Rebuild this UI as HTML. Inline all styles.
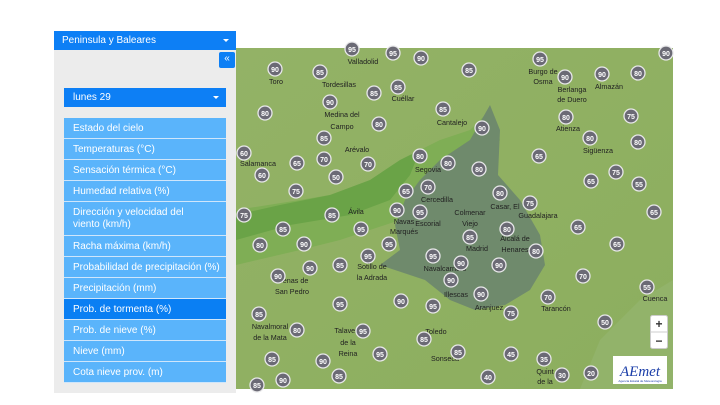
<!DOCTYPE html>
<html><head><meta charset="utf-8"><style>
*{margin:0;padding:0;box-sizing:border-box}
body{width:720px;height:405px;background:#fff;position:relative;overflow:hidden;font-family:"Liberation Sans",sans-serif}
#panel{position:absolute;left:54px;top:48px;width:182px;height:345px;background:#ececec}
.dd{position:absolute;background:#0d7ff5;color:#fff;font-size:10px;line-height:19px;padding-left:8px}
.dd:after{content:"";position:absolute;right:7px;top:8px;border-left:3px solid transparent;border-right:3px solid transparent;border-top:3px solid #fff}
#menu{position:absolute;left:64px;top:118px;width:162px}
#menu div{background:#5ab4fb;color:#fff;font-size:10px;line-height:12px;padding:4.5px 9px 4.5px 9px;border-bottom:1px solid #cfe6fb;height:21px;white-space:nowrap}
#menu div.act{background:#0a7ff3}
#menu div.tall{height:34px}
svg{position:absolute;left:0;top:0}
</style></head><body>
<div id="panel"></div>
<div class="dd" style="left:54px;top:31px;width:182px;height:19px">Peninsula y Baleares</div>
<div style="position:absolute;left:219px;top:52px;width:16px;height:16px;background:#0d7ff5;color:#fff;font-size:10px;line-height:14px;text-align:center;border-radius:2px">«</div>
<div class="dd" style="left:64px;top:88px;width:162px;height:19px;padding-left:9px">lunes 29</div>
<div id="menu">
<div>Estado del cielo</div>
<div>Temperaturas (°C)</div>
<div>Sensación térmica (°C)</div>
<div>Humedad relativa (%)</div>
<div class="tall">Dirección y velocidad del<br>viento (km/h)</div>
<div>Racha máxima (km/h)</div>
<div>Probabilidad de precipitación (%)</div>
<div>Precipitación (mm)</div>
<div class="act">Prob. de tormenta (%)</div>
<div>Prob. de nieve (%)</div>
<div>Nieve (mm)</div>
<div>Cota nieve prov. (m)</div>
</div>
<svg width="720" height="405" viewBox="0 0 720 405">
<defs><clipPath id="c"><rect x="236" y="48" width="437" height="341"/></clipPath>
<linearGradient id="g" x1="0" y1="0" x2="1" y2="1"><stop offset="0" stop-color="#93b266"/><stop offset="1" stop-color="#8cae5e"/></linearGradient></defs>
<g clip-path="url(#c)">
<rect x="236" y="48" width="437" height="341" fill="url(#g)"/>
<path d="M236 210 L300 200 L360 190 L400 170 L420 150 L440 140 L470 130 L490 110 L500 140 L480 180 L440 200 L400 220 L340 240 L300 250 L236 265Z" fill="#7fae55"/>
<path d="M236 240 L290 225 L350 215 L390 200 L410 175 L420 150 L400 160 L370 180 L330 195 L280 205 L236 215Z" fill="#6aa347"/>
<path d="M380 265 L400 250 L395 225 L405 200 L420 180 L440 160 L470 140 L490 105 L500 130 L498 175 L520 200 L540 235 L545 265 L530 290 L505 305 L475 310 L450 300 L425 280Z" fill="#6f8a6c"/>
<path d="M580 389 L600 340 L640 300 L673 280 L673 389Z" fill="#92b36a"/>
</g>
<g font-size="7.2" fill="#222" text-anchor="middle" clip-path="url(#c)">
<text x="363" y="64">Valladolid</text><text x="276" y="84">Toro</text><text x="339" y="87">Tordesillas</text><text x="403" y="101">Cuéllar</text><text x="543" y="74">Burgo de</text><text x="543" y="84">Osma</text><text x="572" y="92">Berlanga</text><text x="572" y="102">de Duero</text><text x="609" y="89">Almazán</text>
<text x="342" y="117">Medina del</text><text x="342" y="129">Campo</text><text x="452" y="125">Cantalejo</text><text x="357" y="152">Arévalo</text><text x="568" y="131">Atienza</text><text x="598" y="153">Sigüenza</text>
<text x="258" y="166">Salamanca</text><text x="428" y="172">Segovia</text><text x="437" y="202">Cercedilla</text><text x="356" y="214">Ávila</text><text x="470" y="215">Colmenar</text><text x="470" y="226">Viejo</text><text x="505" y="209">Casar, El</text><text x="538" y="218">Guadalajara</text>
<text x="404" y="224">Navas</text><text x="428" y="226">Escorial</text><text x="404" y="234">Marqués</text><text x="477" y="251">Madrid</text><text x="515" y="241">Alcalá de</text><text x="515" y="252">Henares</text>
<text x="292" y="283">Arenas de</text><text x="292" y="294">San Pedro</text><text x="372" y="269">Sotillo de</text><text x="372" y="280">la Adrada</text><text x="445" y="271">Navalcarnero</text><text x="456" y="297">Illescas</text><text x="489" y="310">Aranjuez</text><text x="556" y="311">Tarancón</text><text x="655" y="301">Cuenca</text>
<text x="270" y="329">Navalmoral</text><text x="270" y="340">de la Mata</text><text x="348" y="333">Talavera</text><text x="348" y="345">de la</text><text x="348" y="356">Reina</text><text x="436" y="334">Toledo</text><text x="445" y="361">Sonseca</text><text x="545" y="374">Quint</text><text x="545" y="384">de la</text>
</g>
<g fill="#6b6a75" stroke="#e8e8ea" stroke-width="1.3">
<circle cx="352" cy="49" r="7"/><circle cx="393" cy="53" r="7"/><circle cx="421" cy="58" r="7"/><circle cx="540" cy="59" r="7"/><circle cx="666" cy="53" r="7"/><circle cx="275" cy="69" r="7"/><circle cx="320" cy="72" r="7"/><circle cx="469" cy="70" r="7"/><circle cx="565" cy="77" r="7"/><circle cx="602" cy="74" r="7"/><circle cx="638" cy="73" r="7"/><circle cx="398" cy="87" r="7"/><circle cx="374" cy="93" r="7"/><circle cx="330" cy="102" r="7"/><circle cx="265" cy="113" r="7"/><circle cx="443" cy="109" r="7"/><circle cx="379" cy="124" r="7"/><circle cx="482" cy="128" r="7"/><circle cx="566" cy="117" r="7"/><circle cx="631" cy="116" r="7"/><circle cx="324" cy="138" r="7"/><circle cx="590" cy="138" r="7"/><circle cx="638" cy="142" r="7"/><circle cx="244" cy="153" r="7"/><circle cx="262" cy="175" r="7"/><circle cx="297" cy="163" r="7"/><circle cx="324" cy="159" r="7"/><circle cx="368" cy="164" r="7"/><circle cx="420" cy="156" r="7"/><circle cx="448" cy="163" r="7"/><circle cx="539" cy="156" r="7"/><circle cx="479" cy="169" r="7"/><circle cx="591" cy="181" r="7"/><circle cx="616" cy="172" r="7"/><circle cx="639" cy="184" r="7"/><circle cx="336" cy="177" r="7"/><circle cx="296" cy="191" r="7"/><circle cx="406" cy="191" r="7"/><circle cx="428" cy="187" r="7"/><circle cx="500" cy="193" r="7"/><circle cx="530" cy="203" r="7"/><circle cx="332" cy="215" r="7"/><circle cx="397" cy="210" r="7"/><circle cx="420" cy="212" r="7"/><circle cx="244" cy="215" r="7"/><circle cx="654" cy="212" r="7"/><circle cx="283" cy="229" r="7"/><circle cx="361" cy="229" r="7"/><circle cx="578" cy="227" r="7"/><circle cx="507" cy="229" r="7"/><circle cx="470" cy="237" r="7"/><circle cx="536" cy="251" r="7"/><circle cx="389" cy="244" r="7"/><circle cx="433" cy="256" r="7"/><circle cx="461" cy="263" r="7"/><circle cx="499" cy="265" r="7"/><circle cx="260" cy="245" r="7"/><circle cx="304" cy="244" r="7"/><circle cx="368" cy="256" r="7"/><circle cx="340" cy="265" r="7"/><circle cx="617" cy="244" r="7"/><circle cx="310" cy="268" r="7"/><circle cx="278" cy="276" r="7"/><circle cx="451" cy="280" r="7"/><circle cx="481" cy="294" r="7"/><circle cx="583" cy="276" r="7"/><circle cx="548" cy="297" r="7"/><circle cx="647" cy="287" r="7"/><circle cx="340" cy="304" r="7"/><circle cx="401" cy="301" r="7"/><circle cx="433" cy="306" r="7"/><circle cx="511" cy="313" r="7"/><circle cx="605" cy="322" r="7"/><circle cx="259" cy="314" r="7"/><circle cx="363" cy="331" r="7"/><circle cx="297" cy="330" r="7"/><circle cx="424" cy="339" r="7"/><circle cx="380" cy="354" r="7"/><circle cx="511" cy="354" r="7"/><circle cx="544" cy="359" r="7"/><circle cx="272" cy="359" r="7"/><circle cx="323" cy="361" r="7"/><circle cx="458" cy="352" r="7"/><circle cx="339" cy="376" r="7"/><circle cx="283" cy="380" r="7"/><circle cx="257" cy="385" r="7"/><circle cx="488" cy="377" r="7"/><circle cx="591" cy="373" r="7"/><circle cx="562" cy="375" r="7"/>
</g>
<g font-size="7" fill="#fff" text-anchor="middle" font-weight="bold">
<text x="352" y="52">95</text><text x="393" y="56">95</text><text x="421" y="61">90</text><text x="540" y="62">95</text><text x="666" y="56">90</text><text x="275" y="72">90</text><text x="320" y="75">85</text><text x="469" y="73">85</text><text x="565" y="80">90</text><text x="602" y="77">90</text><text x="638" y="76">80</text><text x="398" y="90">85</text><text x="374" y="96">85</text><text x="330" y="105">90</text><text x="265" y="116">80</text><text x="443" y="112">85</text><text x="379" y="127">80</text><text x="482" y="131">90</text><text x="566" y="120">80</text><text x="631" y="119">75</text><text x="324" y="141">85</text><text x="590" y="141">80</text><text x="638" y="145">80</text><text x="244" y="156">60</text><text x="262" y="178">60</text><text x="297" y="166">65</text><text x="324" y="162">70</text><text x="368" y="167">70</text><text x="420" y="159">80</text><text x="448" y="166">80</text><text x="539" y="159">65</text><text x="479" y="172">80</text><text x="591" y="184">65</text><text x="616" y="175">75</text><text x="639" y="187">55</text><text x="336" y="180">50</text><text x="296" y="194">75</text><text x="406" y="194">65</text><text x="428" y="190">70</text><text x="500" y="196">80</text><text x="530" y="206">75</text><text x="332" y="218">85</text><text x="397" y="213">90</text><text x="420" y="215">95</text><text x="244" y="218">75</text><text x="654" y="215">65</text><text x="283" y="232">85</text><text x="361" y="232">95</text><text x="578" y="230">65</text><text x="507" y="232">80</text><text x="470" y="240">85</text><text x="536" y="254">80</text><text x="389" y="247">95</text><text x="433" y="259">95</text><text x="461" y="266">90</text><text x="499" y="268">90</text><text x="260" y="248">80</text><text x="304" y="247">90</text><text x="368" y="259">95</text><text x="340" y="268">85</text><text x="617" y="247">65</text><text x="310" y="271">90</text><text x="278" y="279">90</text><text x="451" y="283">90</text><text x="481" y="297">90</text><text x="583" y="279">70</text><text x="548" y="300">70</text><text x="647" y="290">55</text><text x="340" y="307">95</text><text x="401" y="304">90</text><text x="433" y="309">95</text><text x="511" y="316">75</text><text x="605" y="325">50</text><text x="259" y="317">85</text><text x="363" y="334">95</text><text x="297" y="333">80</text><text x="424" y="342">85</text><text x="380" y="357">95</text><text x="511" y="357">45</text><text x="544" y="362">35</text><text x="272" y="362">85</text><text x="323" y="364">90</text><text x="458" y="355">85</text><text x="339" y="379">85</text><text x="283" y="383">90</text><text x="257" y="388">85</text><text x="488" y="380">40</text><text x="591" y="376">20</text><text x="562" y="378">30</text>
</g>
<rect x="650.5" y="315.5" width="17" height="33" rx="2" fill="#fff" stroke="#ccc"/>
<line x1="651" y1="332" x2="667" y2="332" stroke="#ccc"/>
<text x="659" y="328" font-size="12" font-weight="bold" text-anchor="middle" fill="#333">+</text>
<text x="659" y="345" font-size="12" font-weight="bold" text-anchor="middle" fill="#333">−</text>
<rect x="613" y="356" width="54" height="28" fill="#fff"/>
<text x="640" y="376" font-size="15" font-style="italic" text-anchor="middle" fill="#1a3da8" font-family="Liberation Serif">AEmet</text>
<text x="640" y="382" font-size="3" text-anchor="middle" fill="#1a3da8">Agencia Estatal de Meteorología</text>
</svg>
</body></html>
